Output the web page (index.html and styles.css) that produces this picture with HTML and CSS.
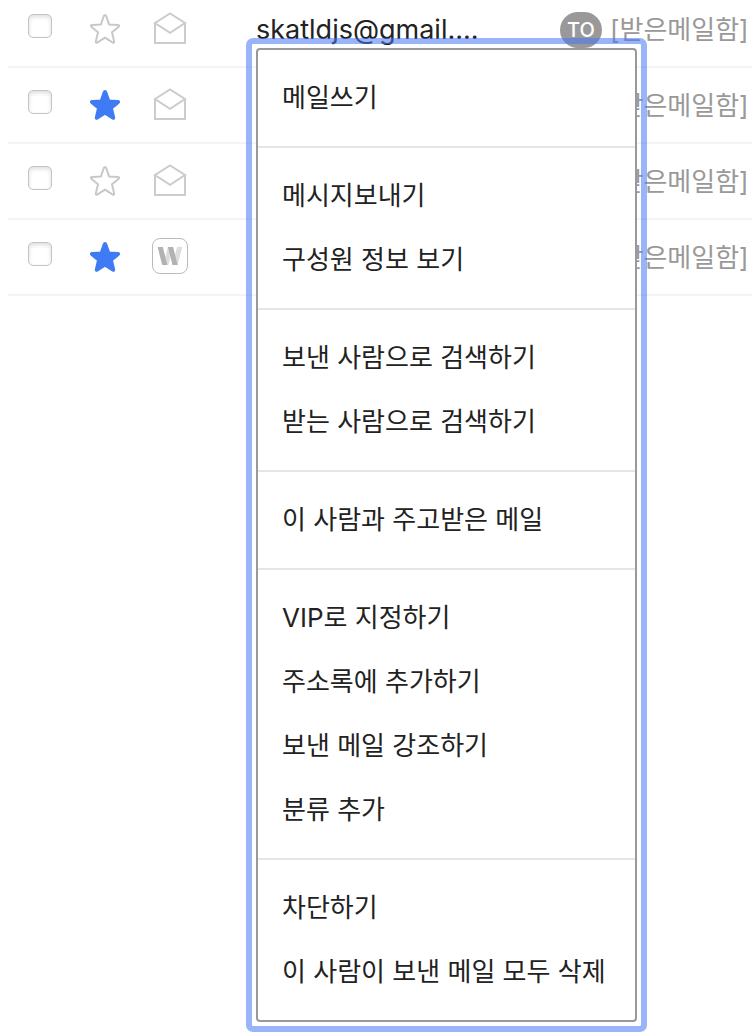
FILE: index.html
```html
<!DOCTYPE html>
<html lang="ko">
<head>
	<meta charset="utf-8">
	<title>받은메일함</title>
	<link rel="stylesheet" href="styles.css">
</head>
<body>
	<svg class="defs" aria-hidden="true">
		<symbol id="star" viewBox="0 0 30 30">
			<path d="M15 1c.7 0 1 .4 1.300 1.200l2.800 8.200 8.600.5c1.600.1 1.900 1.100.7 2.100l-6.400 5.300 2.100 8.900c.3 1.500-.4 2-1.700 1.200L15 23.700l-7.400 4.700c-1.300.8-2 .3-1.700-1.200L8 18.300 1.600 13c-1.200-1-.9-2 .7-2.100l8.600-.5 2.800-8.200C14 1.400 14.300 1 15 1z"/>
		</symbol>
		<symbol id="envelope" viewBox="0 0 36 36">
			<path d="M3 12V33h30V12M3 13L18 3.500 33 13l-15 9.800z"/>
		</symbol>
	</svg>

	<div id="container">
		<ul class="mail_list">
			<li class="row">
				<input type="checkbox" aria-label="메일 선택">
				<button type="button" class="star" aria-label="중요 표시"><svg><use href="#star"/></svg></button>
				<svg class="state"><use href="#envelope"/></svg>
				<a href="#" class="sender">skatldjs@gmail....</a>
				<span class="badge">TO</span>
				<a href="#" class="box_name">[받은메일함]</a>
			</li>
			<li class="row">
				<input type="checkbox" aria-label="메일 선택">
				<button type="button" class="star on" aria-label="중요 표시"><svg><use href="#star"/></svg></button>
				<svg class="state"><use href="#envelope"/></svg>
				<a href="#" class="box_name">[받은메일함]</a>
			</li>
			<li class="row">
				<input type="checkbox" aria-label="메일 선택">
				<button type="button" class="star" aria-label="중요 표시"><svg><use href="#star"/></svg></button>
				<svg class="state"><use href="#envelope"/></svg>
				<a href="#" class="box_name">[받은메일함]</a>
			</li>
			<li class="row">
				<input type="checkbox" aria-label="메일 선택">
				<button type="button" class="star on" aria-label="중요 표시"><svg><use href="#star"/></svg></button>
				<svg class="state works" viewBox="1 1 34 34">
					<svg x="5" y="9" width="26" height="18">
						<path class="light" d="M14.500-4L7.800 22M23.700-4l-6.700 26"/>
						<path class="dark" d="M2.200-4l6.600 26M12.500-4l6.600 26"/>
					</svg>
				</svg>
				<a href="#" class="box_name">[받은메일함]</a>
			</li>
		</ul>

		<!-- 보낸사람 레이어 메뉴 -->
		<div class="layer">
			<div class="menu">
				<ul>
					<li><button type="button">메일쓰기</button></li>
				</ul>
				<ul>
					<li><button type="button">메시지보내기</button></li>
					<li><button type="button">구성원 정보 보기</button></li>
				</ul>
				<ul>
					<li><button type="button">보낸 사람으로 검색하기</button></li>
					<li><button type="button">받는 사람으로 검색하기</button></li>
				</ul>
				<ul>
					<li><button type="button">이 사람과 주고받은 메일</button></li>
				</ul>
				<ul>
					<li><button type="button">VIP로 지정하기</button></li>
					<li><button type="button">주소록에 추가하기</button></li>
					<li><button type="button">보낸 메일 강조하기</button></li>
					<li><button type="button">분류 추가</button></li>
				</ul>
				<ul>
					<li><button type="button">차단하기</button></li>
					<li><button type="button">이 사람이 보낸 메일 모두 삭제</button></li>
				</ul>
			</div>
		</div>
	</div>
</body>
</html>
```
FILE: styles.css
```css
* {
	margin: 0;
	padding: 0;
	box-sizing: border-box;
}
body {
	background: #fff;
	color: #222;
	font: 26px/36px Inter, "Noto Sans CJK KR", sans-serif;
}
ul {
	list-style: none;
}
a {
	color: inherit;
	text-decoration: none;
}
button {
	border: 0;
	background: none;
	color: inherit;
	font: inherit;
	cursor: pointer;
}
.defs {
	position: absolute;
	width: 0;
	height: 0;
}

#container {
	display: flow-root;
	position: relative;
	min-height: 100vh;
	padding-left: 8px;
}

/* mail list */
.mail_list {
	margin-top: -8px;
}
.row {
	display: grid;
	grid-template-columns: 62px 62px 104px 304px 50px 1fr;
	align-items: center;
	height: 76px;
	padding-left: 20px;
	border-bottom: 2px solid #f4f4f4;
	white-space: nowrap;
}
.row input {
	appearance: none;
	width: 24px;
	height: 24px;
	margin-bottom: 6px;
	border: 1px solid #c4c4c4;
	border-radius: 5px;
	background: #fff;
	box-shadow: inset 0 2px 4px #ddd;
}
.star {
	width: 30px;
	height: 30px;
}
.star svg {
	display: block;
	width: 30px;
	height: 30px;
	fill: none;
	stroke: #c8c8c8;
	stroke-width: 2;
	stroke-linejoin: round;
}
.star.on svg {
	fill: #407bf6;
	stroke: #407bf6;
}
.state {
	width: 36px;
	height: 36px;
	margin-bottom: 2px;
	fill: none;
	stroke: #ccc;
	stroke-width: 2;
}
.works {
	border: 1px solid #bbb;
	border-radius: 8px;
	stroke-width: 5;
}
.works .light {
	stroke: #ddd;
}
.works .dark {
	stroke: #b2b2b2;
}
.sender,
.box_name {
	padding-top: 2px;
}
.sender {
	font-size: 27px;
}
.badge {
	width: 42px;
	margin-top: 2px;
	border-radius: 18px;
	background: #999;
	color: #fff;
	font-size: 20px;
	font-weight: 500;
	text-align: center;
}
.box_name {
	grid-column: 6;
	color: #999;
}

/* layer menu */
.layer {
	position: absolute;
	top: 38px;
	left: 246px;
	width: 401px;
	padding: 4px;
	border: 6px solid rgba(69, 118, 243, .55);
	border-radius: 7px;
}
.menu {
	border: 2px solid #999;
	border-radius: 4px;
	background: #fff;
}
.menu ul {
	padding: 16px 0;
}
.menu ul + ul {
	border-top: 2px solid #e5e5e5;
}
.menu button {
	display: block;
	width: 100%;
	height: 64px;
	padding: 0 24px;
	text-align: left;
	white-space: nowrap;
}
```
